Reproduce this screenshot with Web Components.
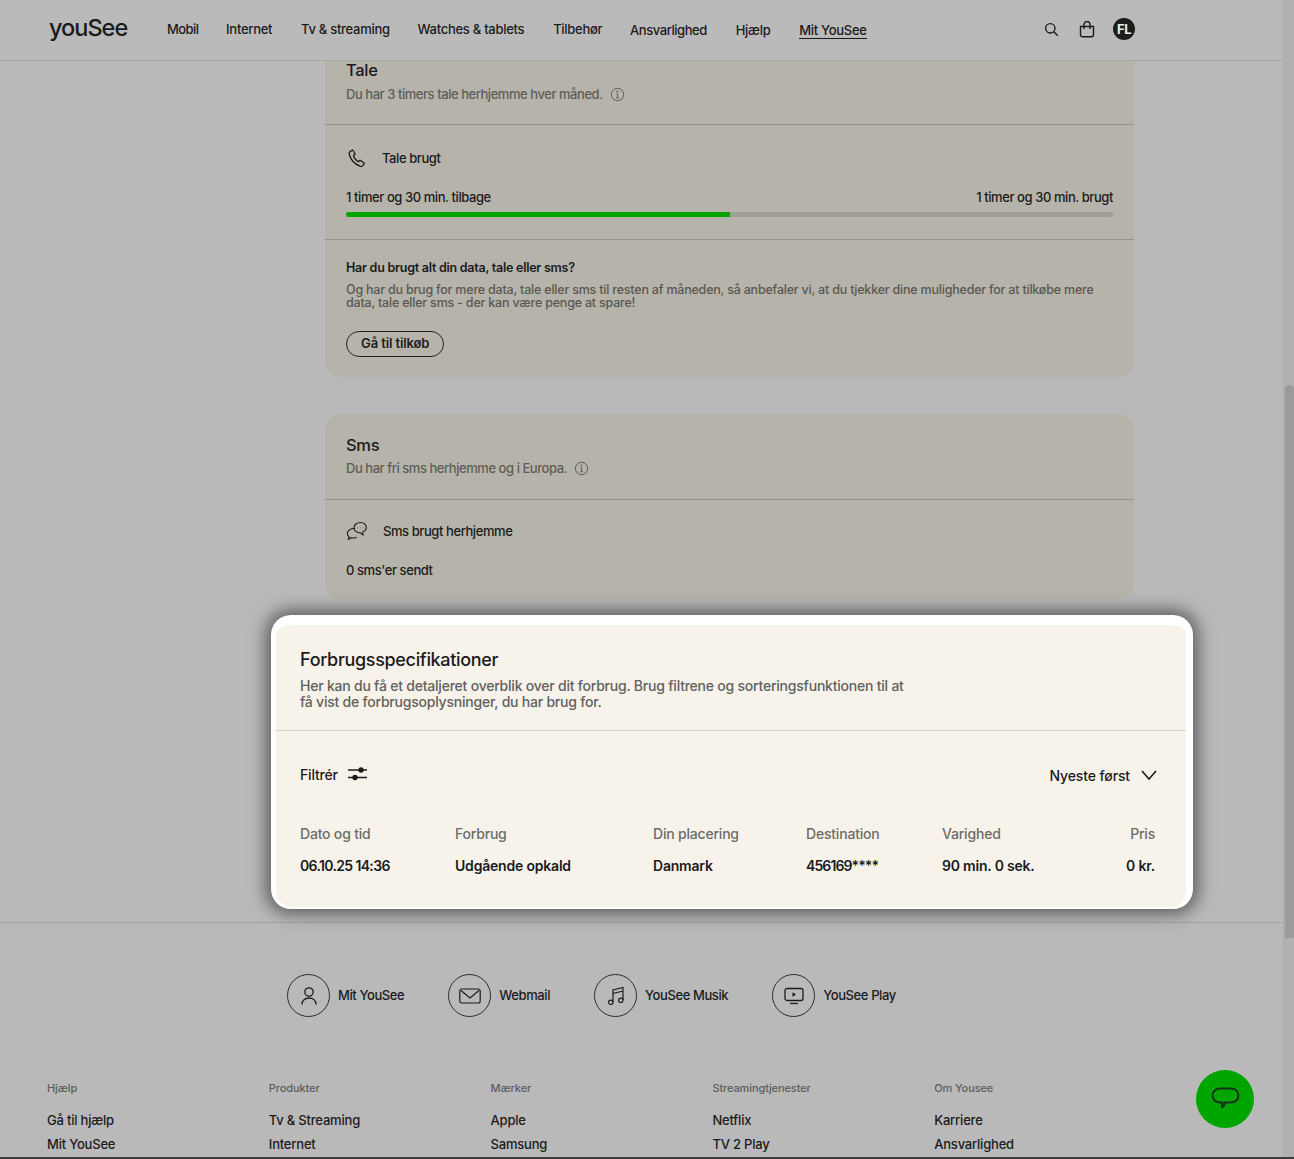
<!DOCTYPE html>
<html lang="da">
<head>
<meta charset="utf-8">
<title>Mit YouSee</title>
<style>
  html, body { margin: 0; height: 1159px; overflow: hidden; background: #b9b9b9; }
  body { font-family: Inter, "Liberation Sans", sans-serif; color: #1b1b1b; }
</style>
</head>
<body>
<yo-page>
  <yo-header></yo-header>
  <yo-usage-card heading="Tale" sub="Du har 3 timers tale herhjemme hver måned." flat>
    <yo-tale-usage></yo-tale-usage>
    <yo-upsell></yo-upsell>
  </yo-usage-card>
  <yo-usage-card heading="Sms" sub="Du har fri sms herhjemme og i Europa.">
    <yo-sms-usage></yo-sms-usage>
  </yo-usage-card>
  <yo-spec></yo-spec>
  <yo-footer></yo-footer>
</yo-page>
<yo-chat></yo-chat>

<script>
// icons shared by the components
const ICONS = {
  info: '<svg width="15" height="15" viewBox="0 0 15 15" fill="none" stroke="currentColor"><circle cx="7.5" cy="7.5" r="6.2"/><path d="M6.4 6.6h1.2v4M6.2 10.8h2.8"/><circle cx="7.3" cy="4.4" r=".5" fill="currentColor"/></svg>',
  phone: '<svg width="20" height="20" viewBox="0 0 20 20" fill="none" stroke="currentColor" stroke-width="1.3" stroke-linejoin="round"><path d="M3 3.6 5.6 2l2.600 4-1.700 1.400c.5 2.600 2.600 5 5 6.200l1.800-1.300 4 3-1.700 2.500c-.6.7-1.700.7-2.800.3C7.800 16 3.600 11.300 2.300 6.500 2 5.300 2.300 4.200 3 3.600Z"/></svg>',
  sms: '<svg width="22" height="20" viewBox="0 0 22 20" fill="none" stroke="currentColor" stroke-width="1.100"><path d="M9 7.500C5 7.200 1.300 9.500 1.300 12.500c0 1.300.7 2.400 1.800 3.200l-.7 2.500 3.200-1.500c1.700.4 3.500.3 5-.4"/><path d="M14.500 1.500c-3.700 0-6.500 2.200-6.500 5.200 0 2.900 2.800 5.100 6 5.100l3 2.100-.3-2.800c2-.9 3.600-2.500 3.600-4.600 0-2.900-2.500-5-5.800-5Z"/><path d="M11.700 6.800h.3M14.300 6.800h.3M16.900 6.800h.3" stroke-width="1.300"/></svg>',
  search: '<svg width="15" height="15" viewBox="0 0 15 15" fill="none" stroke="currentColor" stroke-width="1.400"><circle cx="6.300" cy="6.300" r="4.700"/><path d="m9.800 9.800 4 4"/></svg>',
  bag: '<svg width="16" height="17" viewBox="0 0 16 17" fill="none" stroke="currentColor" stroke-width="1.400"><path d="M1.500 5.500h13v8.300a2 2 0 0 1-2 2h-9a2 2 0 0 1-2-2Z"/><path d="M5 8V3.500a3 3 0 0 1 6 0V8"/></svg>',
  sliders: '<svg width="20" height="16" viewBox="0 0 20 16" fill="#1b1b1b" stroke="#1b1b1b" stroke-width="1.500"><path d="M0 4h19M0 11.500h19" fill="none"/><circle cx="13" cy="4" r="1.900"/><circle cx="7" cy="11.500" r="1.900"/></svg>',
  chevron: '<svg width="16" height="10" viewBox="0 0 16 10" fill="none" stroke="#1b1b1b" stroke-width="1.600"><path d="m1 1 7 8 7-8"/></svg>',
  user: '<svg width="18" height="20" viewBox="0 0 18 20" fill="none" stroke="currentColor" stroke-width="1.300"><circle cx="9" cy="6" r="4.200"/><path d="M2 18.500c0-4.200 3-6.500 7-6.500s7 2.300 7 6.500"/></svg>',
  mail: '<svg width="22" height="16" viewBox="0 0 22 16" fill="none" stroke="currentColor" stroke-width="1.200"><rect x=".8" y="1" width="20.400" height="14" rx="2"/><path d="m2 2.500 9 7.500 9-7.500"/></svg>',
  music: '<svg width="18" height="20" viewBox="0 0 18 20" fill="none" stroke="currentColor" stroke-width="1.200"><path d="M6 16V4l10-2.500V14M6 7.500l10-2.500"/><circle cx="3.800" cy="16.300" r="2.200"/><circle cx="13.800" cy="14.300" r="2.200"/></svg>',
  play: '<svg width="20" height="18" viewBox="0 0 20 18" fill="none" stroke="currentColor" stroke-width="1.300"><rect x="1" y="1.500" width="18" height="12" rx="2"/><path d="M6 16.500h8"/><path d="m8.500 5.300 3.500 2.200-3.500 2.200Z" fill="currentColor" stroke="none"/></svg>',
  chat: '<svg width="29" height="24" viewBox="0 0 29 24" fill="none" stroke="#16301a" stroke-width="2" stroke-linejoin="round"><path d="M9 1.500h11c4 0 7.500 2.800 7.500 7 0 4-3.500 7-7.500 7h-6c-.3 2.200-1 3.500-3 4.800l.5-4.800H9c-4 0-7.500-3-7.500-7 0-4.200 3.500-7 7.500-7Z"/></svg>'
};

// Plain helper so each element only declares its css and markup
function component(tag, css, html) {
  customElements.define(tag, class extends HTMLElement {
    connectedCallback() {
      if (this.shadowRoot) return;
      this.attachShadow({ mode: 'open' });
      const body = typeof html === 'function' ? html(this) : html;
      this.shadowRoot.innerHTML = `<style>${css}</style>${body}`;
    }
  });
}

component('yo-page', `
  :host { display: block; height: 1159px; box-sizing: border-box; border-bottom: 2px solid #3b3d3e; overflow: hidden; }
  .frame { display: grid; grid-template-columns: 1283px 11px; height: 100%; }
  .main { display: flex; flex-direction: column; overflow: hidden; }
  .bar { background: #b1b1b1; border-left: 1px solid #adadad; padding-top: 385px; box-sizing: border-box; }
  .thumb { height: 553px; background: #9b9b9b; border-radius: 4px 4px 0 0; margin-left: 1px; }
`, `<div class="frame"><div class="main"><slot></slot></div><div class="bar"><div class="thumb"></div></div></div>`);

component('yo-header', `
  :host { display: flex; align-items: center; height: 60px; border-bottom: 1px solid #a8a8a8; background: #bababa; padding-left: 49px; font-size: 13px; font-weight: 500; letter-spacing: -.28px; flex: none; box-sizing: content-box; }
  .logo { font-size: 23.500px; letter-spacing: -1px; font-weight: 500; width: 118px; line-height: 56px; padding-bottom: 4px; }
  nav { display: flex; gap: 27.800px; }
  .mobil { letter-spacing: -.6px; }
  .inet, .watch { margin-right: 1px; }
  .ans { letter-spacing: -.45px; margin-right: 1px; }
  .help { margin-right: 1px; }
  .low { padding-top: 1px; }
  .active { display: inline-block; border-bottom: 1.500px solid #1b1b1b; line-height: 15px; }
  .icons { display: flex; align-items: center; margin-left: auto; margin-right: 148px; gap: 20px; padding-bottom: 2px; }
  .icons svg { display: block; }
  .avatar { width: 22px; height: 22px; border-radius: 50%; background: #1d1d1d; color: #eee; font-size: 13px; font-weight: 700; display: flex; align-items: center; justify-content: center; letter-spacing: -.5px; margin-left: -2px; }
`, `<span class="logo">youSee</span>
  <nav>
    <span class="mobil">Mobil</span><span class="inet">Internet</span><span>Tv &amp; streaming</span><span class="watch">Watches &amp; tablets</span><span>Tilbehør</span>
    <span class="low ans">Ansvarlighed</span><span class="low help">Hjælp</span><span class="low"><span class="active">Mit YouSee</span></span>
  </nav>
  <div class="icons">${ICONS.search}${ICONS.bag}<span class="avatar">FL</span></div>`);

component('yo-usage-card', `
  :host { display: block; width: 809px; margin-left: 325px; background: #b6b3aa; border-radius: 16px; margin-top: 37px; flex: none; font-size: 13px; }
  :host([flat]) { margin-top: 0; border-radius: 0 0 16px 16px; }
  .head { padding: 21px 21px 0; height: 64px; border-bottom: 1px solid #94928a; box-sizing: content-box; }
  :host([flat]) .head { padding-top: 0; height: 64px; }
  :host([flat]) h2 { margin-top: -1px; }
  :host([flat]) p { margin-top: 4px; }
  h2 { margin: 0; font-size: 16.500px; font-weight: 500; line-height: 20px; letter-spacing: -.3px; }
  p { margin: 3px 0 0; color: #5f5d58; font-weight: 500; line-height: 20px; display: flex; align-items: center; gap: 7px; letter-spacing: -.45px; }
  svg { display: block; }
`, (el) => `<div class="head"><h2>${el.getAttribute('heading')}</h2><p>${el.getAttribute('sub')} ${ICONS.info}</p></div><slot></slot>`);

component('yo-tale-usage', `
  :host { display: block; height: 114px; border-bottom: 1px solid #94928a; padding: 0 21px; font-weight: 500; box-sizing: content-box; letter-spacing: -.42px; }
  .title { display: flex; align-items: center; gap: 15px; height: 64px; padding: 2px 0 0 1px; box-sizing: border-box; }
  .title svg { display: block; flex: none; }
  .labels { display: flex; justify-content: space-between; line-height: 16px; }
  .track { height: 5px; margin-top: 7px; background: #a09e95; border-radius: 3px; overflow: hidden; }
  .fill { width: 50%; height: 100%; background: #00a500; }
`, `<div class="title">${ICONS.phone}<span>Tale brugt</span></div>
  <div class="labels"><span>1 timer og 30 min. tilbage</span><span>1 timer og 30 min. brugt</span></div>
  <div class="track"><div class="fill"></div></div>`);

component('yo-upsell', `
  :host { display: block; padding: 20px 21px; height: 97px; font-size: 12.500px; letter-spacing: -.207px; box-sizing: content-box; }
  h3 { margin: 0; font-size: 12.500px; font-weight: 600; line-height: 16px; letter-spacing: -.25px; }
  p { margin: 7px 0 0; color: #5a5853; font-weight: 500; line-height: 13px; }
  a { display: inline-block; margin-top: 22px; border: 1.300px solid #222; border-radius: 14px; height: 24px; line-height: 23px; padding: 0 14px; font-size: 13px; font-weight: 600; color: #1b1b1b; letter-spacing: -.1px; }
`, `<h3>Har du brugt alt din data, tale eller sms?</h3>
  <p>Og har du brug for mere data, tale eller sms til resten af måneden, så anbefaler vi, at du tjekker dine muligheder for at tilkøbe mere<br>data, tale eller sms - der kan være penge at spare!</p>
  <a>Gå til tilkøb</a>`);

component('yo-sms-usage', `
  :host { display: block; height: 99px; padding: 0 21px; font-weight: 500; box-sizing: content-box; letter-spacing: -.42px; }
  .title { display: flex; align-items: center; gap: 15px; height: 62px; }
  .title svg { display: block; flex: none; }
  .sent { line-height: 16px; }
`, `<div class="title">${ICONS.sms}<span>Sms brugt herhjemme</span></div><div class="sent">0 sms'er sendt</div>`);

component('yo-spec', `
  :host { display: block; position: relative; z-index: 2; width: 910px; margin: 16px 0 0 271px; flex: none; box-sizing: content-box; background: #f7f3eb; border: solid #fff; border-width: 10px 7px 2px 5px; border-radius: 20px; box-shadow: 0 0 16px 6px #656565; }
  .intro { height: 106px; box-sizing: border-box; padding: 25px 24px 0; border-bottom: 1px solid #d9d4c8; }
  h2 { margin: 0; font-size: 18px; font-weight: 500; line-height: 20px; letter-spacing: -.33px; }
  .intro p { margin: 8px 0 0; color: #62615d; font-size: 14px; font-weight: 500; line-height: 16px; letter-spacing: -.22px; }
  .tools { display: flex; justify-content: space-between; align-items: center; padding: 0 29px 0 24px; height: 86px; font-size: 14px; font-weight: 500; letter-spacing: -.2px; }
  .tools span { display: flex; align-items: center; gap: 10px; }
  .tools .sort { gap: 11px; padding-top: 2px; letter-spacing: -.12px; }
  .tools svg { display: block; }
  .table { display: grid; grid-template-columns: 155px 198px 153px 136px 1fr auto; padding: 0 31px 32px 24px; font-size: 14px; letter-spacing: -.2px; }
  .th { color: #6d6c68; font-weight: 500; line-height: 18px; padding-top: 8px; }
  .td { font-weight: 600; line-height: 18px; padding-top: 14px; }
  .end { text-align: right; }
  .date { letter-spacing: -.65px; }
  .num { letter-spacing: -.9px; }
`, `<div class="intro"><h2>Forbrugsspecifikationer</h2>
    <p>Her kan du få et detaljeret overblik over dit forbrug. Brug filtrene og sorteringsfunktionen til at<br>få vist de forbrugsoplysninger, du har brug for.</p></div>
  <div class="tools"><span>Filtrér ${ICONS.sliders}</span><span class="sort">Nyeste først ${ICONS.chevron}</span></div>
  <div class="table">
    <div class="th">Dato og tid</div><div class="th">Forbrug</div><div class="th">Din placering</div><div class="th">Destination</div><div class="th">Varighed</div><div class="th end">Pris</div>
    <div class="td date">06.10.25 14:36</div><div class="td">Udgående opkald</div><div class="td">Danmark</div><div class="td num">456169****</div><div class="td">90 min. 0 sek.</div><div class="td end">0 kr.</div>
  </div>`);

const QUICK = [['user', 'Mit YouSee'], ['mail', 'Webmail'], ['music', 'YouSee Musik'], ['play', 'YouSee Play']];
const COLUMNS = [
  ['Hjælp', 'Gå til hjælp', 'Mit YouSee'],
  ['Produkter', 'Tv & Streaming', 'Internet'],
  ['Mærker', 'Apple', 'Samsung'],
  ['Streamingtjenester', 'Netflix', 'TV 2 Play'],
  ['Om Yousee', 'Karriere', 'Ansvarlighed']
];

component('yo-footer', `
  :host { display: block; margin-top: 13px; border-top: 1px solid #a3a3a3; flex: none; font-size: 13px; font-weight: 500; letter-spacing: -.2px; }
  .quick { display: flex; gap: 44px; padding: 51px 0 0 287px; letter-spacing: -.4px; }
  .quick a { display: flex; align-items: center; gap: 8px; }
  .quick b { font-weight: inherit; padding-bottom: 2px; }
  .ring { width: 41px; height: 41px; border: 1.400px solid #2b2b2b; border-radius: 50%; display: flex; align-items: center; justify-content: center; }
  .ring svg { display: block; }
  .cols { display: grid; grid-template-columns: repeat(5, 221.800px); padding: 64px 0 0 47px; }
  .h { font-size: 11px; color: #5d5d5d; line-height: 14px; margin-bottom: 13px; letter-spacing: -.1px; }
  .l { line-height: 24px; }
`, () => `<div class="quick">${QUICK.map(q => `<a><span class="ring">${ICONS[q[0]]}</span><b>${q[1]}</b></a>`).join('')}</div>
  <div class="cols">${COLUMNS.map(c => `<div><div class="h">${c[0]}</div><div class="l">${c[1].replace('&', '&amp;')}</div><div class="l">${c[2]}</div></div>`).join('')}</div>`);

component('yo-chat', `
  :host { position: fixed; left: 1196px; top: 1070px; width: 58px; height: 58px; border-radius: 50%; background: #00a500; display: flex; align-items: center; justify-content: center; z-index: 5; }
  svg { display: block; }
`, ICONS.chat);
</script>
</body>
</html>
